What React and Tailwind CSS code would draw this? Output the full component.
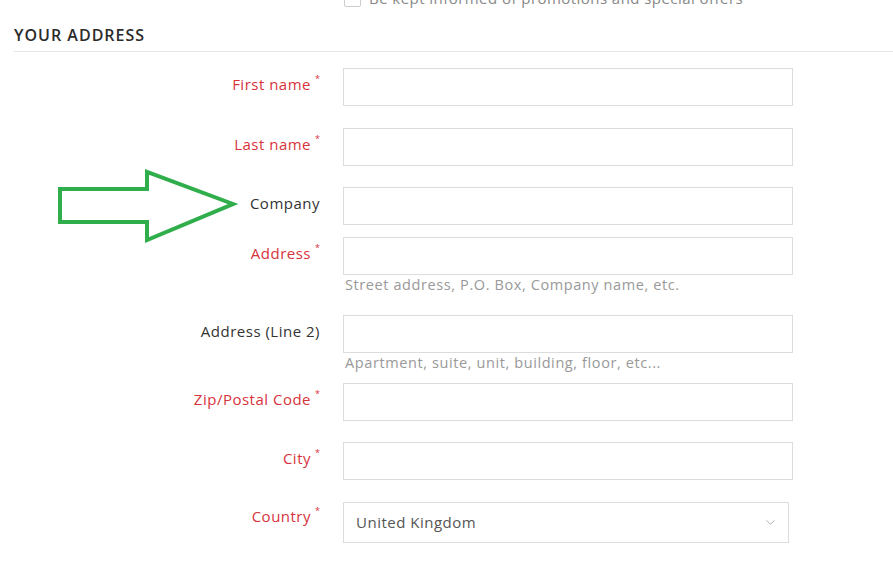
import { ChevronDown } from 'lucide-react';

const rows = [
  { label: 'First name', required: true, mt: 'mt-[16px]' },
  { label: 'Last name', required: true, mt: 'mt-[22px]' },
  { label: 'Company', required: false, mt: 'mt-[21px]' },
  { label: 'Address', required: true, mt: 'mt-[12px]', help: 'Street address, P.O. Box, Company name, etc.' },
  { label: 'Address (Line 2)', required: false, mt: 'mt-[19px]', help: 'Apartment, suite, unit, building, floor, etc...' },
  { label: 'Zip/Postal Code', required: true, mt: 'mt-[9px]' },
  { label: 'City', required: true, mt: 'mt-[21px]' },
];

function Field({ label, required, mt, help }) {
  return (
    <div className={`flex ${mt}`}>
      <div className="w-[320px] shrink-0 pt-[4px] text-right">
        <span className={`text-[15px] leading-[22px] tracking-[0.5px] ${required ? 'text-[#d7333b]' : 'text-[#333]'}`}>
          {label}
        </span>
        {required && <span className="ml-[4px] align-top text-[9px] leading-[14px] text-[#d7333b]">*</span>}
      </div>
      <div className="ml-[23px]">
        <input className="block h-[38px] w-[450px] border border-[#dcdcdc] bg-white px-3 outline-none" />
        {help && <p className="-mt-[1px] pl-[2px] text-[14.5px] leading-[22px] tracking-[0.6px] text-[#999]">{help}</p>}
      </div>
    </div>
  );
}

export default function App() {
  return (
    <div className="relative h-[578px] w-[893px] overflow-hidden bg-white font-['Open_Sans',sans-serif]">
      <div className="-mt-[13px] ml-[344px] flex items-center gap-[8px]">
        <span className="h-[17px] w-[17px] rounded-[2px] border border-[#ccc] bg-white" />
        <span className="text-[15px] leading-[22px] tracking-[0.45px] text-[#888]">Be kept informed of promotions and special offers</span>
      </div>

      <div className="ml-[14px] mt-[14px] border-b border-[#e6e6e6] pb-[4px]">
        <h2 className="text-[16px] font-semibold leading-[24px] tracking-[1px] text-[#2b2b2b]">YOUR ADDRESS</h2>
      </div>

      {rows.map((r) => (
        <Field key={r.label} {...r} />
      ))}

      <div className="mt-[22px] flex">
        <div className="w-[320px] shrink-0 pt-[2px] text-right">
          <span className="text-[15px] leading-[22px] tracking-[0.5px] text-[#d7333b]">Country</span>
          <span className="ml-[4px] align-top text-[9px] leading-[14px] text-[#d7333b]">*</span>
        </div>
        <div className="ml-[23px] flex h-[41px] w-[446px] items-center justify-between border border-[#dcdcdc] pl-[12px] pr-[10px]">
          <span className="text-[15px] tracking-[0.5px] text-[#555]">United Kingdom</span>
          <ChevronDown size={15} strokeWidth={1.5} className="text-[#aaa]" />
        </div>
      </div>

      <svg className="absolute left-[54px] top-[167px]" width="186" height="78" viewBox="54 167 186 78">
        <polygon
          points="60,189 147,189 147,172 233,204 147,240 147,222 60,222"
          fill="none"
          stroke="#2fae4b"
          strokeWidth="4"
          strokeLinejoin="miter"
        />
      </svg>
    </div>
  );
}
